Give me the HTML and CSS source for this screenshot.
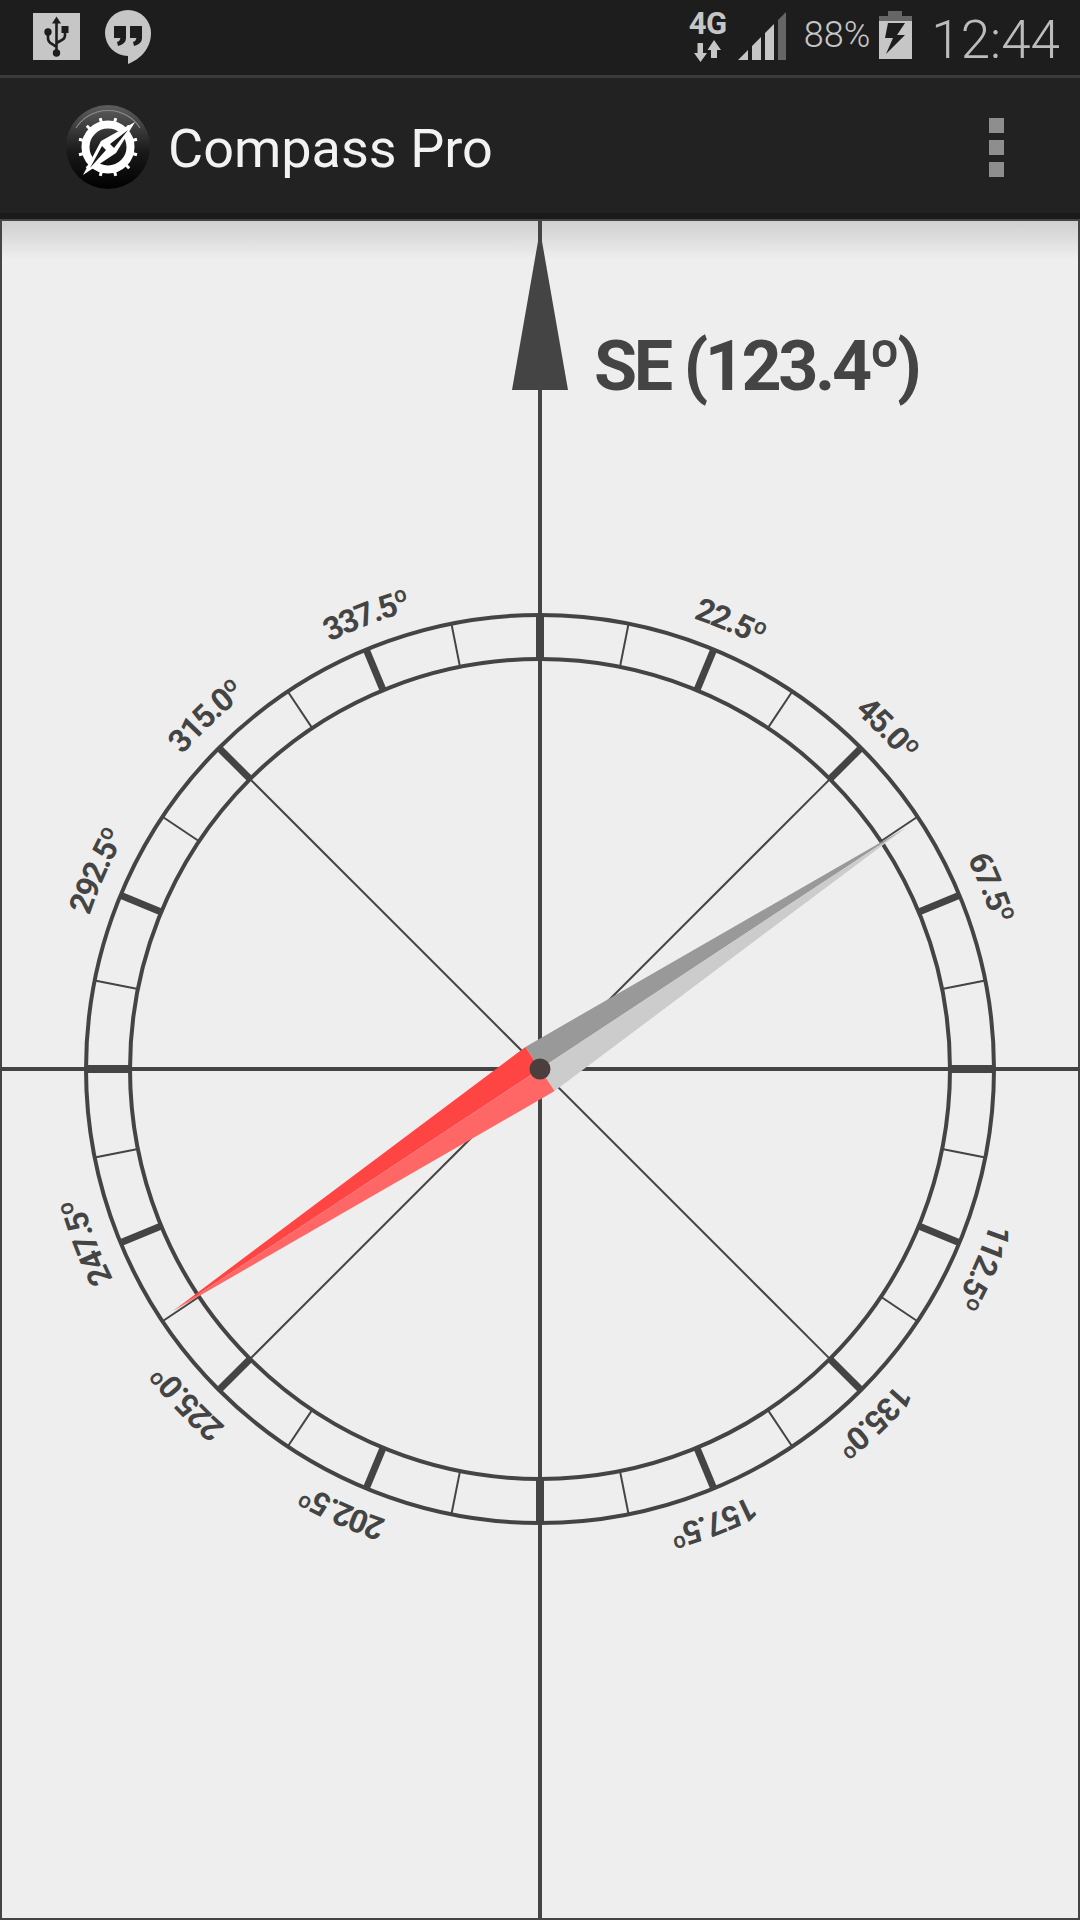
FILE: index.html
```html
<!DOCTYPE html>
<html lang="en">
<head>
<meta charset="utf-8">
<title>Compass Pro</title>
<link rel="stylesheet" href="styles.css">
</head>
<body>
<div class="app">
  <header class="status-bar">
    <div class="status-left">
      <svg class="icon-usb" viewBox="0 0 47 47">
        <rect class="fill-light" width="47" height="47"/>
        <path class="glyph-stroke" d="M23.5 9V40M15 19V25Q15 29 19 31L23.5 34M32 18V22Q32 26 28 27.5L23.5 30"/>
        <path class="glyph-fill" d="M23.5 3.5L28 10.500H19Z"/>
        <circle class="glyph-fill" cx="15" cy="19" r="3.700"/>
        <rect class="glyph-fill" x="28.500" y="13" width="7" height="7"/>
        <circle class="glyph-fill" cx="23.500" cy="40" r="3.700"/>
      </svg>
      <svg class="icon-hangouts" viewBox="0 0 46 54">
        <path class="fill-light" d="M23 0A23 23 0 0 1 46 23C46 38 36 49 23 54V46A23 23 0 0 1 23 0Z"/>
        <path class="glyph-fill" d="M9 16H21V28Q21 34 13 36L12 32Q15 31 15.500 28H9ZM25 16H37V28Q37 34 29 36L28 32Q31 31 31.500 28H25Z"/>
      </svg>
    </div>
    <div class="status-right">
      <div class="net">
        <span class="net-label">4G</span>
        <svg class="net-arrows" viewBox="0 0 28 22">
          <path class="fill-light" d="M3.500 3H9V13H13L6.500 22L0 13H3.500ZM17 10H13.500L20 0L27 10H23V18H17Z"/>
        </svg>
      </div>
      <svg class="signal" viewBox="0 0 48 48">
        <path class="fill-light" d="M0 48L10 38V48ZM14 34L23 25V48H14ZM27 21L36 12V48H27Z"/>
        <path class="fill-dim" d="M40 8L48 0V48H40Z"/>
      </svg>
      <span class="battery-text">88%</span>
      <svg class="battery" viewBox="0 0 33 48">
        <path class="fill-dim" d="M9 0H23V5H33V11H0V5H9Z"/>
        <rect class="fill-light" y="10" width="33" height="38"/>
        <path class="glyph-fill" d="M9 12H26L18 24H26L7 43L14 27H6Z"/>
      </svg>
      <span class="clock">12:44</span>
    </div>
  </header>

  <div class="action-bar">
    <div class="brand">
      <svg class="logo" viewBox="0 0 88 88">
        <defs>
          <linearGradient id="logoFill" x1="0" y1="0" x2="0" y2="1">
            <stop offset="0" stop-color="#5e5e5e"/>
            <stop offset="0.55" stop-color="#1a1a1a"/>
            <stop offset="1" stop-color="#000"/>
          </linearGradient>
        </defs>
        <circle cx="44" cy="44" r="42" fill="url(#logoFill)"/>
        <path class="logo-rim" d="M12 25A38 38 0 0 1 76 25"/>
        <circle class="logo-ring" cx="44" cy="44" r="22.500"/>
        <g class="logo-teeth">
          <path d="M44 14V22" transform="rotate(15 44 44)"/>
          <path d="M44 14V22" transform="rotate(45 44 44)"/>
          <path d="M44 14V22" transform="rotate(75 44 44)"/>
          <path d="M44 14V22" transform="rotate(105 44 44)"/>
          <path d="M44 14V22" transform="rotate(135 44 44)"/>
          <path d="M44 14V22" transform="rotate(165 44 44)"/>
          <path d="M44 14V22" transform="rotate(195 44 44)"/>
          <path d="M44 14V22" transform="rotate(225 44 44)"/>
          <path d="M44 14V22" transform="rotate(255 44 44)"/>
          <path d="M44 14V22" transform="rotate(285 44 44)"/>
          <path d="M44 14V22" transform="rotate(315 44 44)"/>
          <path d="M44 14V22" transform="rotate(345 44 44)"/>
        </g>
        <path class="logo-needle" d="M71 19L52 50L19 72L37 38Z"/>
        <path class="logo-cut" d="M64 27L46 41L50 45ZM26 65L42 47L38 43Z"/>
      </svg>
      <span class="title">Compass Pro</span>
    </div>
    <div class="overflow-menu">
      <span class="dot"></span>
      <span class="dot"></span>
      <span class="dot"></span>
    </div>
  </div>
  <div class="action-shadow"></div>

  <main class="compass">
    <svg class="dial" viewBox="0 221 1080 1699">
      <defs>
        <path id="labelArc" d="M540 593A476 476 0 1 1 539.990 593Z"/>
      </defs>
      <path class="axis" d="M540 221V1920M0 1069H1080"/>
      <path class="arrow" d="M540 230L568 390H512Z"/>
      <text class="heading" x="594" y="390">SE (123.4º)</text>

      <g class="spokes">
        <path d="M540 659V1069" transform="rotate(45 540 1069)"/>
        <path d="M540 659V1069" transform="rotate(135 540 1069)"/>
        <path d="M540 659V1069" transform="rotate(225 540 1069)"/>
        <path d="M540 659V1069" transform="rotate(315 540 1069)"/>
      </g>

      <g class="ticks-minor">
        <path d="M540 615V659" transform="rotate(11.25 540 1069)"/>
        <path d="M540 615V659" transform="rotate(33.75 540 1069)"/>
        <path d="M540 615V659" transform="rotate(56.25 540 1069)"/>
        <path d="M540 615V659" transform="rotate(78.75 540 1069)"/>
        <path d="M540 615V659" transform="rotate(101.25 540 1069)"/>
        <path d="M540 615V659" transform="rotate(123.75 540 1069)"/>
        <path d="M540 615V659" transform="rotate(146.25 540 1069)"/>
        <path d="M540 615V659" transform="rotate(168.75 540 1069)"/>
        <path d="M540 615V659" transform="rotate(191.25 540 1069)"/>
        <path d="M540 615V659" transform="rotate(213.75 540 1069)"/>
        <path d="M540 615V659" transform="rotate(236.25 540 1069)"/>
        <path d="M540 615V659" transform="rotate(258.75 540 1069)"/>
        <path d="M540 615V659" transform="rotate(281.25 540 1069)"/>
        <path d="M540 615V659" transform="rotate(303.75 540 1069)"/>
        <path d="M540 615V659" transform="rotate(326.25 540 1069)"/>
        <path d="M540 615V659" transform="rotate(348.75 540 1069)"/>
      </g>

      <g class="ticks-major">
        <path d="M540 615V659" transform="rotate(22.5 540 1069)"/>
        <path d="M540 615V659" transform="rotate(45 540 1069)"/>
        <path d="M540 615V659" transform="rotate(67.5 540 1069)"/>
        <path d="M540 615V659" transform="rotate(112.5 540 1069)"/>
        <path d="M540 615V659" transform="rotate(135 540 1069)"/>
        <path d="M540 615V659" transform="rotate(157.5 540 1069)"/>
        <path d="M540 615V659" transform="rotate(202.5 540 1069)"/>
        <path d="M540 615V659" transform="rotate(225 540 1069)"/>
        <path d="M540 615V659" transform="rotate(247.5 540 1069)"/>
        <path d="M540 615V659" transform="rotate(292.5 540 1069)"/>
        <path d="M540 615V659" transform="rotate(315 540 1069)"/>
        <path d="M540 615V659" transform="rotate(337.5 540 1069)"/>
      </g>

      <g class="ticks-cardinal">
        <path d="M540 615V659"/>
        <path d="M540 615V659" transform="rotate(90 540 1069)"/>
        <path d="M540 615V659" transform="rotate(180 540 1069)"/>
        <path d="M540 615V659" transform="rotate(270 540 1069)"/>
      </g>

      <circle class="ring" cx="540" cy="1069" r="454"/>
      <circle class="ring" cx="540" cy="1069" r="410"/>

      <text class="tick-label"><textPath href="#labelArc" startOffset="5.22%">22.5º</textPath></text>
      <text class="tick-label"><textPath href="#labelArc" startOffset="11.47%">45.0º</textPath></text>
      <text class="tick-label"><textPath href="#labelArc" startOffset="17.72%">67.5º</textPath></text>
      <text class="tick-label"><textPath href="#labelArc" startOffset="30.22%">112.5º</textPath></text>
      <text class="tick-label"><textPath href="#labelArc" startOffset="36.47%">135.0º</textPath></text>
      <text class="tick-label"><textPath href="#labelArc" startOffset="42.72%">157.5º</textPath></text>
      <text class="tick-label"><textPath href="#labelArc" startOffset="55.22%">202.5º</textPath></text>
      <text class="tick-label"><textPath href="#labelArc" startOffset="61.47%">225.0º</textPath></text>
      <text class="tick-label"><textPath href="#labelArc" startOffset="67.72%">247.5º</textPath></text>
      <text class="tick-label"><textPath href="#labelArc" startOffset="80.22%">292.5º</textPath></text>
      <text class="tick-label"><textPath href="#labelArc" startOffset="86.47%">315.0º</textPath></text>
      <text class="tick-label"><textPath href="#labelArc" startOffset="92.72%">337.5º</textPath></text>

      <g transform="rotate(56.6 540 1069)">
        <path class="needle-grey-dark" d="M540 631L513.500 1069H540Z"/>
        <path class="needle-grey-light" d="M540 631L566.500 1069H540Z"/>
        <path class="needle-red-dark" d="M540 1509L513.500 1069H540Z"/>
        <path class="needle-red-light" d="M540 1509L566.500 1069H540Z"/>
      </g>
      <circle class="pivot" cx="540" cy="1069" r="10.500"/>
    </svg>
  </main>
</div>
</body>
</html>
```

FILE: styles.css
```css
* {
  box-sizing: border-box;
}

html,
body {
  margin: 0;
  padding: 0;
  background: #1d1d1d;
}

.app {
  display: flex;
  flex-direction: column;
  width: 1080px;
  height: 1920px;
  overflow: hidden;
  font-family: Roboto, "Liberation Sans", sans-serif;
}

/* Status bar */
.status-bar {
  display: flex;
  justify-content: space-between;
  align-items: flex-start;
  flex: none;
  height: 78px;
  padding: 10px 20px 0 33px;
  background: #1d1d1d;
  border-bottom: 3px solid #3a3a3a;
}

.status-left {
  display: flex;
  align-items: flex-start;
  gap: 25px;
}

.status-right {
  display: flex;
  align-items: flex-start;
}

.icon-usb {
  display: block;
  width: 47px;
  height: 47px;
  margin-top: 3px;
}

.icon-hangouts {
  display: block;
  width: 46px;
  height: 54px;
}

.fill-light {
  fill: #c6c6c6;
}

.fill-dim {
  fill: #666;
}

.glyph-fill {
  fill: #1d1d1d;
}

.glyph-stroke {
  fill: none;
  stroke: #1d1d1d;
  stroke-width: 2.600;
}

.net {
  display: flex;
  flex-direction: column;
  align-items: center;
  width: 40px;
  margin-top: 1px;
}

.net-label {
  font-size: 31px;
  line-height: 26px;
  font-weight: 700;
  color: #c6c6c6;
  letter-spacing: -0.5px;
}

.net-arrows {
  display: block;
  width: 28px;
  height: 22px;
  margin-top: 3px;
}

.signal {
  display: block;
  width: 48px;
  height: 48px;
  margin: 2px 0 0 10px;
}

.battery-text {
  margin-left: 18px;
  font-size: 36px;
  line-height: 50px;
  font-weight: 300;
  color: #c6c6c6;
}

.battery {
  display: block;
  width: 33px;
  height: 48px;
  margin: 1px 0 0 9px;
}

.clock {
  margin-left: 19px;
  font-size: 53px;
  line-height: 60px;
  font-weight: 300;
  color: #bcbcbc;
}

/* Action bar */
.action-bar {
  display: flex;
  justify-content: space-between;
  align-items: center;
  flex: none;
  height: 135px;
  padding: 3px 76px 0 64px;
  background: #222;
}

.brand {
  display: flex;
  align-items: center;
  gap: 16px;
}

.logo {
  display: block;
  width: 88px;
  height: 88px;
}

.logo-rim {
  fill: none;
  stroke: #8a8a8a;
  stroke-width: 1.200;
}

.logo-ring {
  fill: none;
  stroke: #fff;
  stroke-width: 8;
}

.logo-teeth path {
  fill: none;
  stroke: #fff;
  stroke-width: 3;
}

.logo-needle {
  fill: #fff;
}

.logo-cut {
  fill: #1a1a1a;
}

.title {
  padding-top: 3px;
  font-size: 54px;
  font-weight: 400;
  color: #f2f2f2;
}

.overflow-menu {
  display: flex;
  flex-direction: column;
  gap: 7px;
}

.dot {
  display: block;
  width: 15px;
  height: 15px;
  background: #8e8e8e;
}

.action-shadow {
  flex: none;
  height: 8px;
  background: #1a1a1a;
  border-bottom: 2px solid #444;
}

/* Compass */
.compass {
  flex: 1;
  min-height: 0;
  background: linear-gradient(#cfcfcf, #eee 38px);
  box-shadow: inset 2px 0 0 #444, inset -2px 0 0 #444, inset 0 -2px 0 #444;
}

.dial {
  display: block;
  width: 1080px;
  height: 1699px;
}

.axis {
  fill: none;
  stroke: #444;
  stroke-width: 4;
}

.arrow {
  fill: #444;
}

.heading {
  font-size: 70px;
  font-weight: 700;
  letter-spacing: -3.4px;
  fill: #444;
}

.spokes path,
.ticks-minor path {
  fill: none;
  stroke: #444;
  stroke-width: 2;
}

.ticks-major path {
  fill: none;
  stroke: #444;
  stroke-width: 7;
}

.ticks-cardinal path {
  fill: none;
  stroke: #444;
  stroke-width: 8;
}

.ring {
  fill: none;
  stroke: #444;
  stroke-width: 4;
}

.tick-label {
  font-size: 32px;
  font-weight: 700;
  letter-spacing: -1.8px;
  fill: #444;
}

.needle-grey-dark {
  fill: #999;
}

.needle-grey-light {
  fill: #ccc;
}

.needle-red-dark {
  fill: #f44;
}

.needle-red-light {
  fill: #f66;
}

.pivot {
  fill: #4a3f3c;
}
```
